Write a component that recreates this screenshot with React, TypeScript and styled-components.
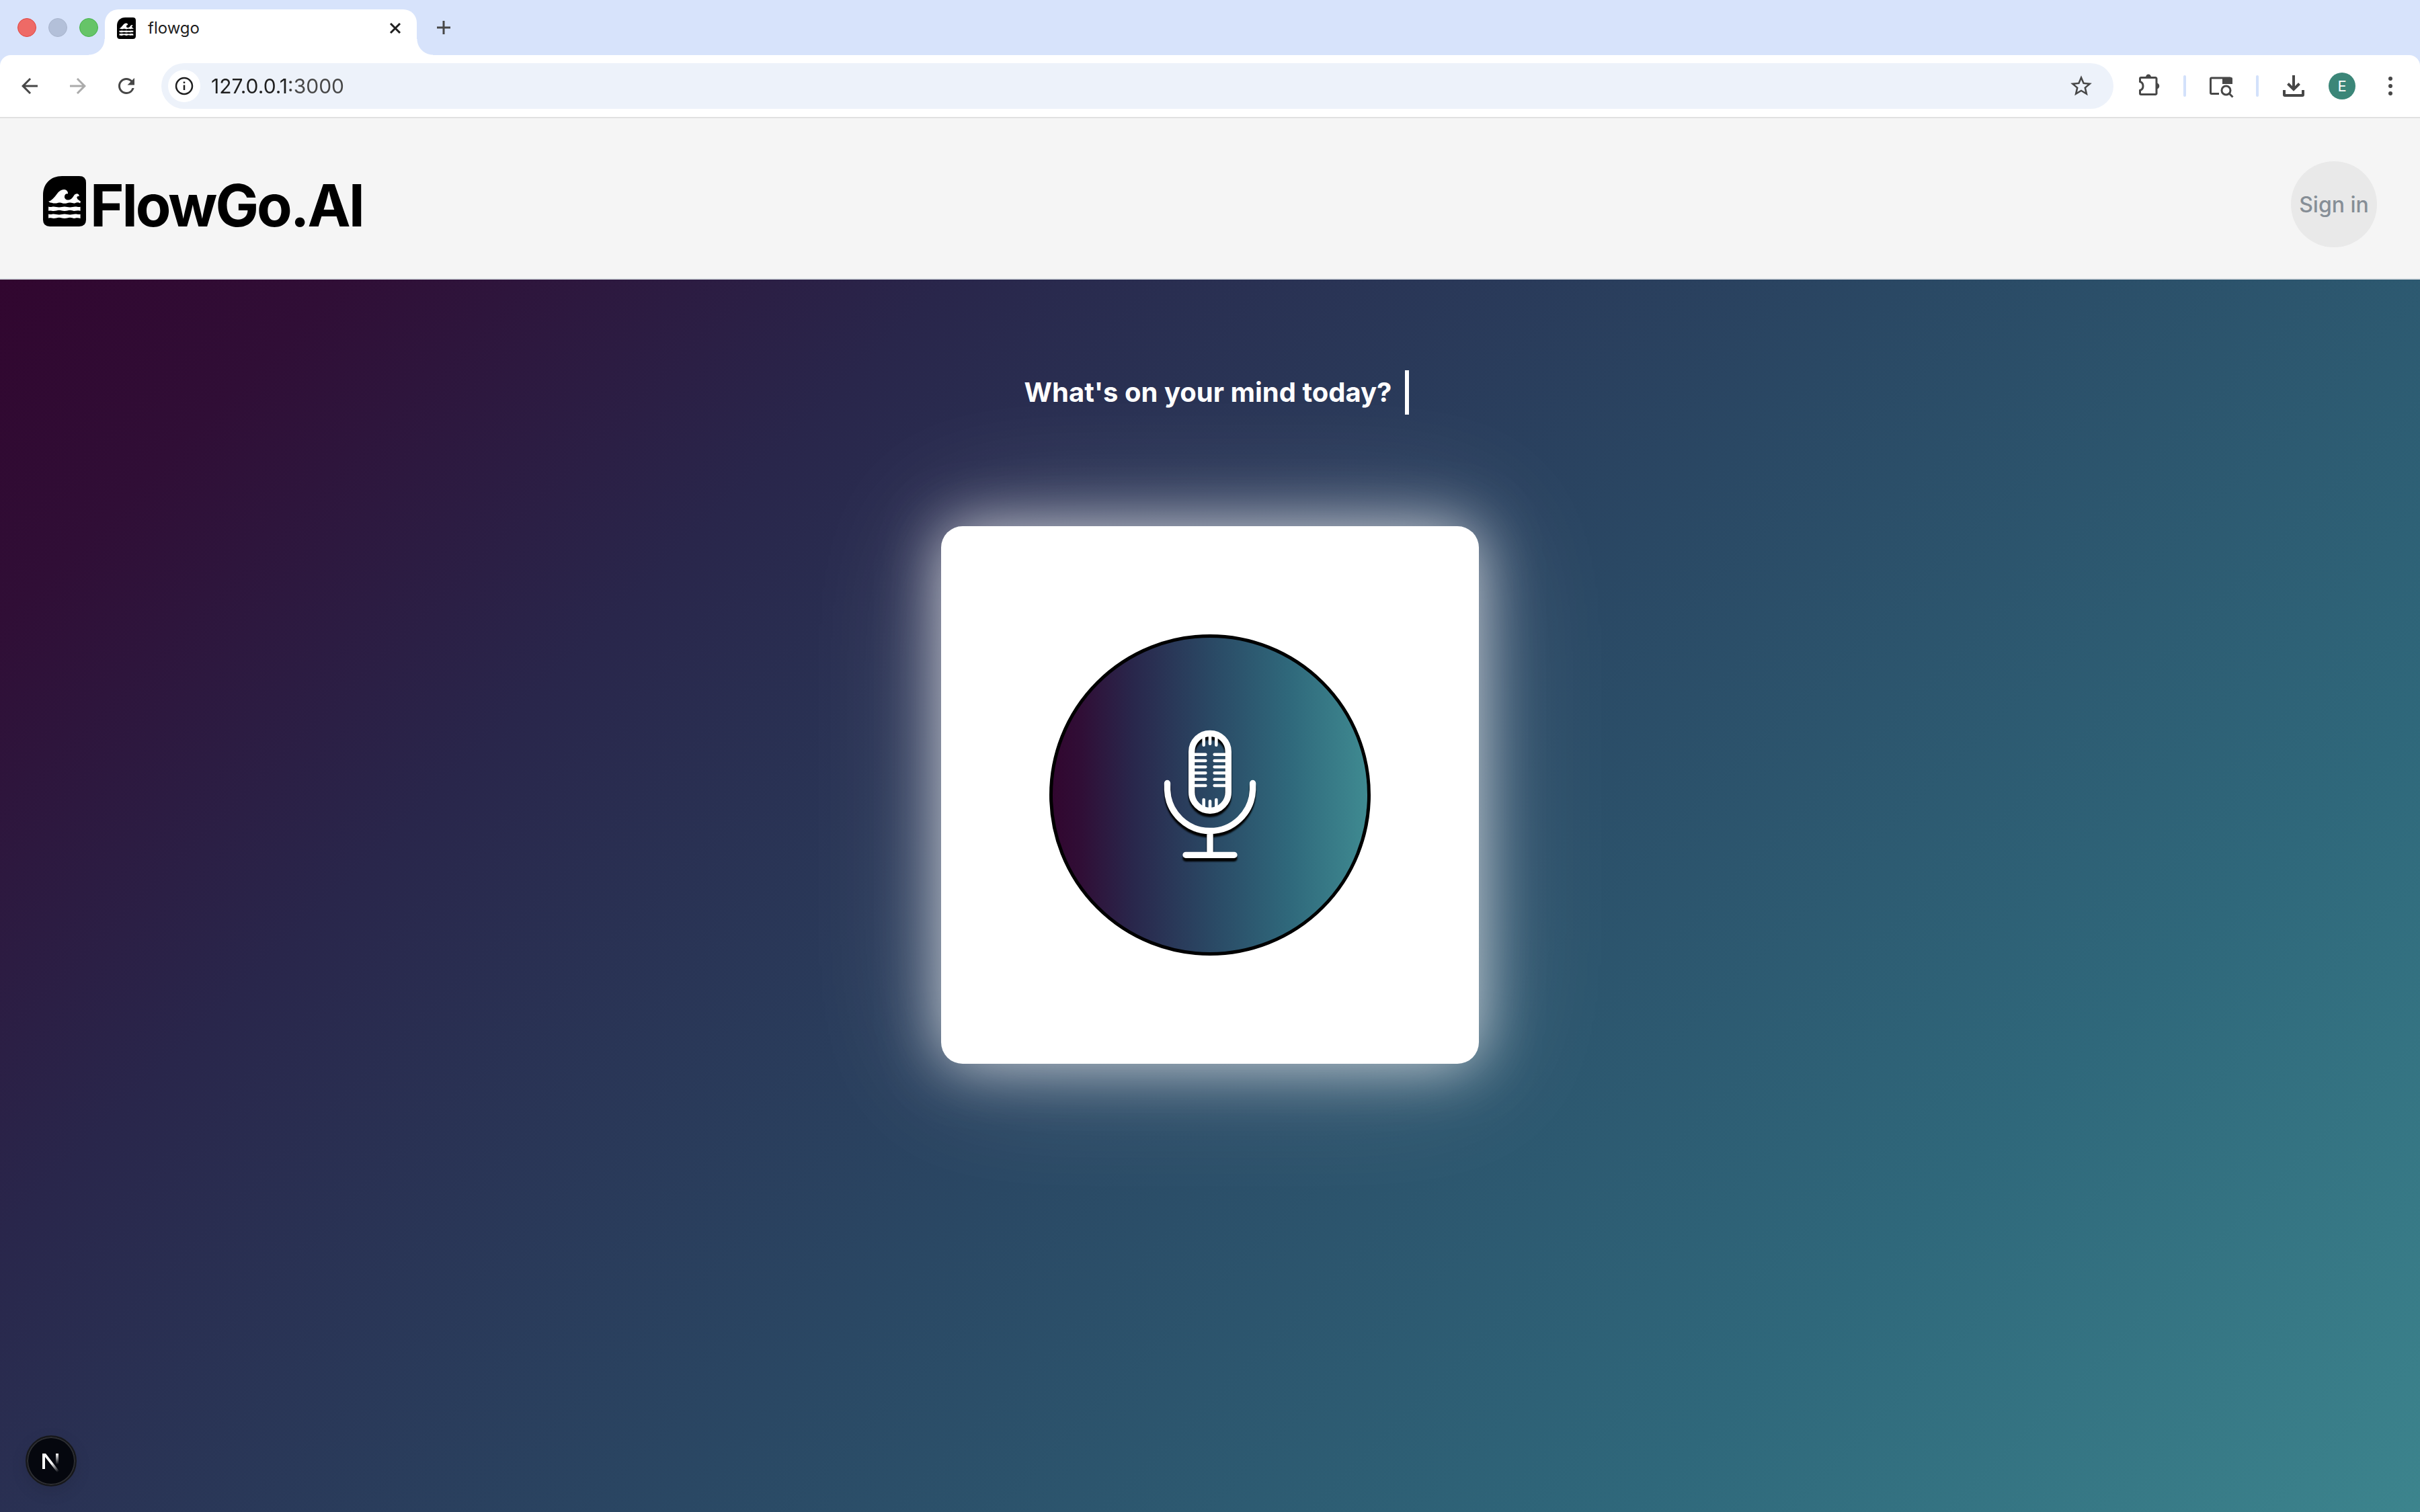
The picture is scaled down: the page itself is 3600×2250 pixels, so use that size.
import React from "react";
import styled, { createGlobalStyle } from "styled-components";
import { MdArrowBack, MdArrowForward, MdRefresh, MdStarBorder } from "react-icons/md";

const GlobalStyle = createGlobalStyle`
  *, *::before, *::after { box-sizing: border-box; }
  body {
    margin: 0;
    font-family: Inter, "Liberation Sans", sans-serif;
    background: #f4f4f4;
  }
  button, input { font: inherit; }
`;

const flow = "#31062f 0%, #300e36 9%, #29264b 25%, #2a4864 50%, #2f687b 75%, #3f8a91 100%";

const Window = styled.div`
  display: flex;
  flex-direction: column;
  height: 100vh;
`;

/* Browser chrome */

const TabStrip = styled.div`
  display: flex;
  align-items: flex-end;
  height: 82px;
  padding-left: 26px;
  background: #d7e3fb;
`;

const Lights = styled.div`
  display: flex;
  align-items: center;
  gap: 18px;
  height: 82px;
  margin-right: 10px;
`;

const Light = styled.button<{ $fill: string; $edge: string }>`
  width: 28px;
  height: 28px;
  padding: 0;
  border: 1px solid ${(p) => p.$edge};
  border-radius: 50%;
  background: ${(p) => p.$fill};
`;

const Tab = styled.div`
  position: relative;
  display: flex;
  align-items: center;
  gap: 18px;
  width: 464px;
  height: 68px;
  padding: 0 22px 12px 18px;
  border-radius: 20px 20px 0 0;
  background: #fff;
  color: #1f1f1f;
  font-size: 24px;
  line-height: 32px;

  &::before,
  &::after {
    content: "";
    position: absolute;
    bottom: 0;
    width: 24px;
    height: 24px;
  }
  &::before {
    right: 100%;
    background: radial-gradient(circle at 0 0, transparent 23px, #fff 24px);
  }
  &::after {
    left: 100%;
    background: radial-gradient(circle at 100% 0, transparent 23px, #fff 24px);
  }
`;

const TabTitle = styled.span`
  flex: 1;
`;

const PlainButton = styled.button`
  display: flex;
  align-items: center;
  justify-content: center;
  padding: 0;
  border: 0;
  background: none;
  color: inherit;
`;

const NewTab = styled(PlainButton)`
  width: 28px;
  height: 82px;
  margin-left: 26px;
  color: #474747;
`;

const ToolbarBack = styled.div`
  background: #d7e3fb;
`;

const Toolbar = styled.div`
  display: flex;
  align-items: center;
  gap: 32px;
  padding: 12px 24px;
  border-bottom: 2px solid #e1e1e1;
  border-radius: 16px 16px 0 0;
  background: #fff;
  color: #474747;
`;

const ToolButton = styled(PlainButton)<{ $muted?: boolean }>`
  width: 40px;
  height: 40px;
  color: ${(p) => (p.$muted ? "#ababab" : "#474747")};
`;

const AddressBar = styled.div`
  display: flex;
  flex: 1;
  align-items: center;
  height: 68px;
  padding: 0 28px 0 10px;
  border-radius: 34px;
  background: #edf2fa;
`;

const SiteInfo = styled(PlainButton)`
  width: 48px;
  height: 48px;
  border-radius: 50%;
  background: #fff;
  color: #1f1f1f;
`;

const Url = styled.input`
  flex: 1;
  min-width: 0;
  margin-left: 16px;
  padding: 0;
  border: 0;
  outline: 0;
  font-size: 30px;
  line-height: 40px;
  color: transparent;
  background: linear-gradient(90deg, #1f1f1f 118px, #474747 118px);
  -webkit-background-clip: text;
  background-clip: text;
`;

const Divider = styled.span`
  width: 4px;
  height: 32px;
  border-radius: 2px;
  background: #d3e1fb;
`;

const Avatar = styled(PlainButton)`
  width: 40px;
  height: 40px;
  border-radius: 50%;
  background: #3b8678;
  color: #fff;
  font-size: 22px;
`;

/* Page */

const Viewport = styled.div`
  flex: 1;
  min-height: 0;
  overflow-y: auto;
  scrollbar-width: none;
`;

const Header = styled.header`
  display: flex;
  align-items: flex-start;
  justify-content: space-between;
  padding: 64px 64px 46px;
  border-bottom: 2px solid #dee2e6;
  background: #f5f5f5;
`;

const Brand = styled.a`
  display: flex;
  align-items: flex-start;
  gap: 6px;
  padding-top: 22px;
  color: #000;
  text-decoration: none;
`;

const BrandName = styled.span`
  font-size: 86px;
  font-weight: 700;
  line-height: 88px;
  letter-spacing: -3px;
`;

const SignIn = styled.button`
  width: 128px;
  height: 128px;
  padding: 0;
  border: 0;
  border-radius: 50%;
  background: #e9e9e9;
  color: #868e96;
  font-size: 32px;
  font-weight: 500;
  white-space: nowrap;
`;

/* As tall as the viewport, so the page scrolls by the height of the header */
const Main = styled.main`
  display: flex;
  flex-direction: column;
  align-items: center;
  min-height: calc(100vh - 176px);
  padding: 135px 64px;
  background: linear-gradient(135deg, ${flow});
`;

const Prompt = styled.h1`
  display: flex;
  align-items: center;
  gap: 20px;
  margin: 0 0 166px;
  padding-left: 20px;
  color: #fff;
  font-size: 40px;
  font-weight: 700;
  line-height: 66px;
`;

const Caret = styled.span`
  width: 6px;
  height: 66px;
  background: #fff;
`;

const Card = styled.section`
  display: flex;
  align-items: center;
  justify-content: center;
  width: 800px;
  height: 800px;
  border-radius: 32px;
  background: #fff;
  box-shadow: 0 0 90px rgba(255, 255, 255, 0.7), 0 0 200px rgba(255, 255, 255, 0.25);
`;

const Record = styled.button`
  display: flex;
  align-items: center;
  justify-content: center;
  width: 478px;
  height: 478px;
  padding: 0;
  border: 5px solid #000;
  border-radius: 50%;
  background: linear-gradient(90deg, ${flow});
`;

const MicOutline = styled.g`
  filter: drop-shadow(0 5px 1px #000);
`;

const DevBadge = styled.button`
  position: fixed;
  left: 38px;
  bottom: 38px;
  display: flex;
  align-items: center;
  justify-content: center;
  width: 76px;
  height: 76px;
  padding: 6px 0 0;
  border: 2px solid #17181b;
  border-radius: 50%;
  background: #05070e;
  box-shadow: inset 0 0 0 2px #2e2f33, 0 8px 24px rgba(0, 0, 0, 0.1);
`;

const LogoMark = ({ width, height }: { width: number; height: number }) => (
  <svg width={width} height={height} viewBox="24 24 190 226" preserveAspectRatio="none" aria-hidden="true">
    <path
      fill="#000"
      d="M108 24H184Q214 24 214 54V220Q214 250 184 250H54Q24 250 24 220V108C24 58 58 24 108 24Z"
    />
    <g fill="#fff">
      <path d="M48 138C62 134 72 122 84 106C94 91 105 84 117 84C128 84 135 93 134 104C127 101 120 106 119 115C118 125 126 132 137 131C149 130 155 120 160 112C166 103 175 101 181 106C183 109 184 112 183 115C177 113 172 116 174 122C176 130 183 132 190 137L188 146C181 141 172 142 166 145C158 148 153 143 144 143C135 142 128 147 119 147C110 147 105 142 96 143C87 144 83 147 74 146C66 146 63 142 55 143Z" />
      <path d="M48 161C58 165 64 161 71 161C80 161 85 164 95 164C105 164 110 161 119 161C128 161 134 164 143 164C152 164 158 161 166 161C175 161 180 164 189 162V180C181 177 174 178 166 180C158 182 152 177 143 177C134 177 128 181 119 181C110 181 105 177 95 177C86 177 80 181 71 181C63 181 57 177 48 180Z" />
      <path d="M48 194C58 198 64 194 71 194C80 194 85 197 95 197C105 197 110 194 119 194C128 194 134 197 143 197C152 197 158 194 166 194C175 194 180 197 189 195V214C181 211 174 211 166 213C158 215 152 210 143 210C134 210 128 214 119 214C110 214 105 210 95 210C86 210 80 214 71 214C63 214 57 210 48 213Z" />
    </g>
  </svg>
);

const Microphone = () => (
  <svg width="200" height="240" viewBox="0 3 200 240" fill="none" stroke="#fff" strokeLinecap="round" aria-hidden="true">
    <MicOutline strokeWidth="9.3">
      <rect x="72.7" y="31.3" width="54.6" height="115" rx="27.3" />
      <path d="M36.5 105.5V115.4A63.6 63.6 0 0 0 163.6 115.4V105.5M100 179V212M64 212.3H136" />
    </MicOutline>
    <g strokeWidth="4.6">
      <path d="M90.7 36V48.7M100 34V46.7M109.3 36V48.7M90.7 130V142M100 132.3V144M109.3 130V142" />
      {[62.7, 72, 81.3, 90.3, 99.7, 109].map((y) => (
        <path key={y} d={`M76 ${y}H93.3M106.7 ${y}H124`} />
      ))}
    </g>
  </svg>
);

const Puzzle = () => (
  <svg width="40" height="40" viewBox="-4 0 40 40" aria-hidden="true">
    <path
      d="M5 7.5H26.5A1.5 1.5 0 0 1 28 9V31A1.5 1.5 0 0 1 26.5 32.5H5A1.5 1.5 0 0 1 3.5 31V26.5C6.5 25.5 8 23 8 20S6.5 14.5 3.5 13.5V9A1.5 1.5 0 0 1 5 7.5Z"
      fill="none"
      stroke="currentColor"
      strokeWidth="3"
    />
    <path d="M12 7A4 4.5 0 0 1 20 7ZM28 15.5A4.3 4.5 0 0 1 28 24.5Z" fill="currentColor" />
  </svg>
);

const TabSearch = () => (
  <svg width="40" height="40" viewBox="0 0 40 40" fill="none" stroke="currentColor" strokeWidth="3" aria-hidden="true">
    <path d="M17 31.5H6A1.5 1.5 0 0 1 4.5 30V9.5A1.5 1.5 0 0 1 6 8H34" />
    <path d="M22 7H35Q37 7 37 9V17H22Z" fill="currentColor" stroke="none" />
    <circle cx="27.5" cy="26.5" r="6.5" />
    <path d="M32 31L37.5 36.5" />
  </svg>
);

const Download = () => (
  <svg width="40" height="40" viewBox="-4 -4 40 40" fill="none" stroke="currentColor" strokeWidth="4" aria-hidden="true">
    <path d="M16 0V20M7.5 12.5L16 21L24.5 12.5" />
    <path d="M2 22V29Q2 30 3 30H29Q30 30 30 29V22" />
  </svg>
);

export default function App() {
  return (
    <Window>
      <GlobalStyle />
      <TabStrip>
        <Lights>
          <Light $fill="#ee6a66" $edge="#e24640" aria-label="Close window" />
          <Light $fill="#b3c0d9" $edge="#a9b5cd" aria-label="Minimise window" />
          <Light $fill="#66c468" $edge="#45b54a" aria-label="Zoom window" />
        </Lights>
        <Tab>
          <LogoMark width={28} height={32} />
          <TabTitle>flowgo</TabTitle>
          <PlainButton aria-label="Close tab">
            <svg width="20" height="20" viewBox="0 0 20 20" fill="none" stroke="currentColor" strokeWidth="3">
              <path d="M3 3L17 17M17 3L3 17" />
            </svg>
          </PlainButton>
        </Tab>
        <NewTab aria-label="New tab">
          <svg width="24" height="24" viewBox="0 0 24 24" fill="none" stroke="currentColor" strokeWidth="3">
            <path d="M12 2V22M2 12H22" />
          </svg>
        </NewTab>
      </TabStrip>
      <ToolbarBack>
        <Toolbar>
          <ToolButton aria-label="Back"><MdArrowBack size={36} /></ToolButton>
          <ToolButton $muted aria-label="Forward"><MdArrowForward size={36} /></ToolButton>
          <ToolButton aria-label="Reload"><MdRefresh size={36} /></ToolButton>
          <AddressBar>
            <SiteInfo aria-label="Site information">
              <svg width="28" height="28" viewBox="0 0 28 28" fill="none" stroke="currentColor">
                <circle cx="14" cy="14" r="12" strokeWidth="2.5" />
                <path d="M14 12.5V20M14 7.5V10" strokeWidth="2.5" />
              </svg>
            </SiteInfo>
            <Url aria-label="Address" defaultValue="127.0.0.1:3000" />
            <ToolButton aria-label="Bookmark this page"><MdStarBorder size={38} /></ToolButton>
          </AddressBar>
          <ToolButton aria-label="Extensions"><Puzzle /></ToolButton>
          <Divider />
          <ToolButton aria-label="Search tabs"><TabSearch /></ToolButton>
          <Divider />
          <ToolButton aria-label="Downloads"><Download /></ToolButton>
          <Avatar aria-label="Profile">E</Avatar>
          <ToolButton aria-label="Menu">
            <svg width="40" height="40" viewBox="0 0 40 40" fill="currentColor">
              <circle cx="20" cy="9" r="3" />
              <circle cx="20" cy="20" r="3" />
              <circle cx="20" cy="31" r="3" />
            </svg>
          </ToolButton>
        </Toolbar>
      </ToolbarBack>
      <Viewport>
        <Header>
          <Brand href="#">
            <LogoMark width={64} height={75} />
            <BrandName>FlowGo.AI</BrandName>
          </Brand>
          <SignIn>Sign in</SignIn>
        </Header>
        <Main>
          <Prompt>
            What's on your mind today?
            <Caret />
          </Prompt>
          <Card>
            <Record aria-label="Start recording">
              <Microphone />
            </Record>
          </Card>
        </Main>
      </Viewport>
      <DevBadge aria-label="Open Next.js Dev Tools">
        <svg width="26" height="28" viewBox="0 0 26 28" fill="none" aria-hidden="true">
          <defs>
            <linearGradient id="diagonal" x1="14" y1="14" x2="24" y2="27" gradientUnits="userSpaceOnUse">
              <stop stopColor="#fff" />
              <stop offset="1" stopColor="#fff" stopOpacity="0" />
            </linearGradient>
            <linearGradient id="stem" x1="22" y1="0" x2="22" y2="16" gradientUnits="userSpaceOnUse">
              <stop stopColor="#fff" />
              <stop offset="1" stopColor="#fff" stopOpacity="0" />
            </linearGradient>
          </defs>
          <path d="M0 23V0H5L25 26L22 28L4 5V23Z" fill="url(#diagonal)" />
          <path d="M20 0H24V16H20Z" fill="url(#stem)" />
        </svg>
      </DevBadge>
    </Window>
  );
}
